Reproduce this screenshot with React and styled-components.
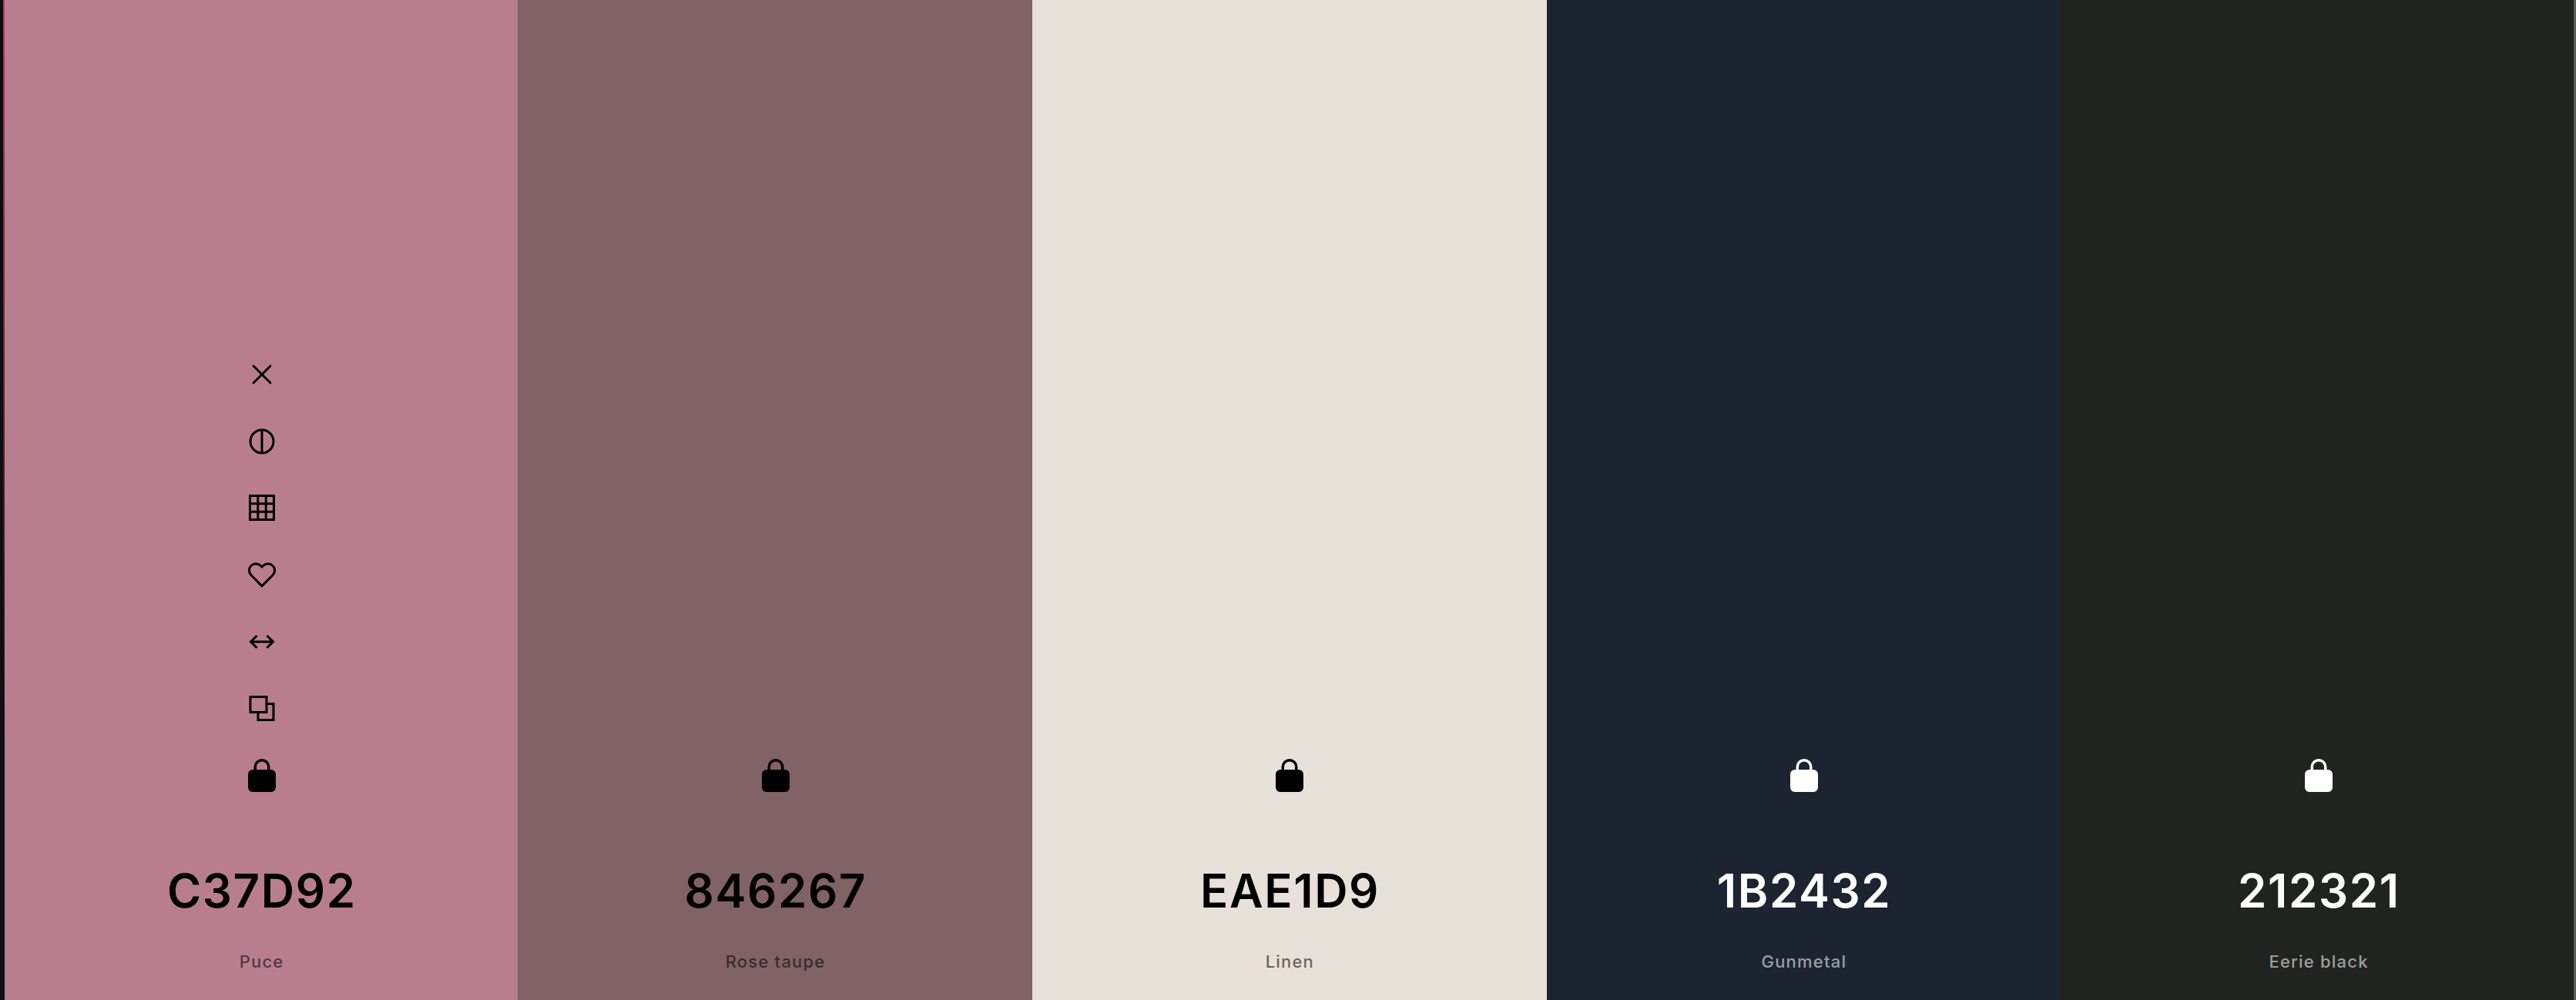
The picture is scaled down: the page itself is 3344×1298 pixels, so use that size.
import styled, { createGlobalStyle } from "styled-components";
import { FiHeart, FiX } from "react-icons/fi";

const GlobalStyle = createGlobalStyle`
  html, body {
    margin: 0;
    padding: 0;
    height: 100%;
    background: #0d0d12;
    font-family: Inter, "Liberation Sans", sans-serif;
  }
`;

const Page = styled.main`
  position: relative;
  display: grid;
  grid-template-columns: 2px 666px 668px 667.5px 667.5px 1fr;
  height: 1298px;
  padding-left: 4px;
  box-sizing: border-box;
  overflow: hidden;
`;

const EdgeRule = styled.div`
  background: linear-gradient(to bottom, #c9304f 0%, #0d0d12 75%);
`;

const RightEdge = styled.div`
  position: absolute;
  top: 0;
  right: 0;
  bottom: 0;
  width: 3px;
  background: #5f5f5f;
`;

const Swatch = styled.section`
  display: flex;
  flex-direction: column;
  justify-content: flex-end;
  align-items: center;
  padding-bottom: 35px;
  background: ${(p) => p.$bg};
  color: ${(p) => p.$fg};
`;

const Tools = styled.div`
  display: flex;
  flex-direction: column;
  align-items: center;
  gap: 46.67px;
  margin-bottom: 93.5px;
  padding-left: 1px;
`;

const ToolIcon = styled.span`
  display: flex;
  width: 40px;
  height: 40px;
  align-items: center;
  justify-content: center;

  svg {
    flex: none;
  }
`;

const Hex = styled.h2`
  margin: 0 0 41.5px;
  padding-left: 1.6px;
  font-size: 60px;
  line-height: 72px;
  font-weight: 600;
  letter-spacing: 1.6px;
`;

const Name = styled.p`
  margin: 0;
  padding-left: 1.2px;
  font-size: 22px;
  line-height: 30px;
  font-weight: 500;
  letter-spacing: 1.2px;
  opacity: 0.55;
`;

const Line = ({ children }) => (
  <svg width="40" height="40" viewBox="0 0 40 40" fill="none" stroke="currentColor" strokeWidth="3">
    {children}
  </svg>
);

const ContrastIcon = () => (
  <Line>
    <circle cx="20" cy="20" r="15" />
    <path d="M20 5v30" />
  </Line>
);

const GridIcon = () => (
  <Line>
    <rect x="4.5" y="4.5" width="31" height="31" />
    <path d="M14.8 4.5v31M25.2 4.5v31M4.5 14.8h31M4.5 25.2h31" />
  </Line>
);

const ArrowsIcon = () => (
  <Line>
    <path d="M5 20h30M13.5 12l-8 8 8 8M26.5 12l8 8-8 8" />
  </Line>
);

const OverlapIcon = () => (
  <Line>
    <rect x="5" y="5.5" width="21" height="20" />
    <path d="M26.5 14.5H35v21H15V26" />
  </Line>
);

const LockIcon = () => (
  <svg width="40" height="44" viewBox="0 0 40 44" fill="currentColor">
    <path d="M11.25 16v-4.5a8.75 8.75 0 0 1 17.5 0V16" fill="none" stroke="currentColor" strokeWidth="3.5" />
    <rect x="2" y="15" width="36" height="29" rx="6" />
  </svg>
);

const colors = [
  { hex: "C37D92", name: "Puce", bg: "#b87e90", fg: "#000", tools: true },
  { hex: "846267", name: "Rose taupe", bg: "#816266", fg: "#000" },
  { hex: "EAE1D9", name: "Linen", bg: "#e8e1da", fg: "#000" },
  { hex: "1B2432", name: "Gunmetal", bg: "#1c2331", fg: "#fff" },
  { hex: "212321", name: "Eerie black", bg: "#212321", fg: "#fff" },
];

const toolIcons = [
  <FiX size={44} strokeWidth={1.6} />,
  <ContrastIcon />,
  <GridIcon />,
  <FiHeart size={38} strokeWidth={1.9} />,
  <ArrowsIcon />,
  <OverlapIcon />,
];

const App = () => (
  <>
    <GlobalStyle />
    <Page>
      <EdgeRule />
      {colors.map((c) => (
        <Swatch key={c.hex} $bg={c.bg} $fg={c.fg}>
          <Tools>
            {c.tools && toolIcons.map((icon, i) => <ToolIcon key={i}>{icon}</ToolIcon>)}
            <ToolIcon>
              <LockIcon />
            </ToolIcon>
          </Tools>
          <Hex>{c.hex}</Hex>
          <Name>{c.name}</Name>
        </Swatch>
      ))}
      <RightEdge />
    </Page>
  </>
);

export default App;
